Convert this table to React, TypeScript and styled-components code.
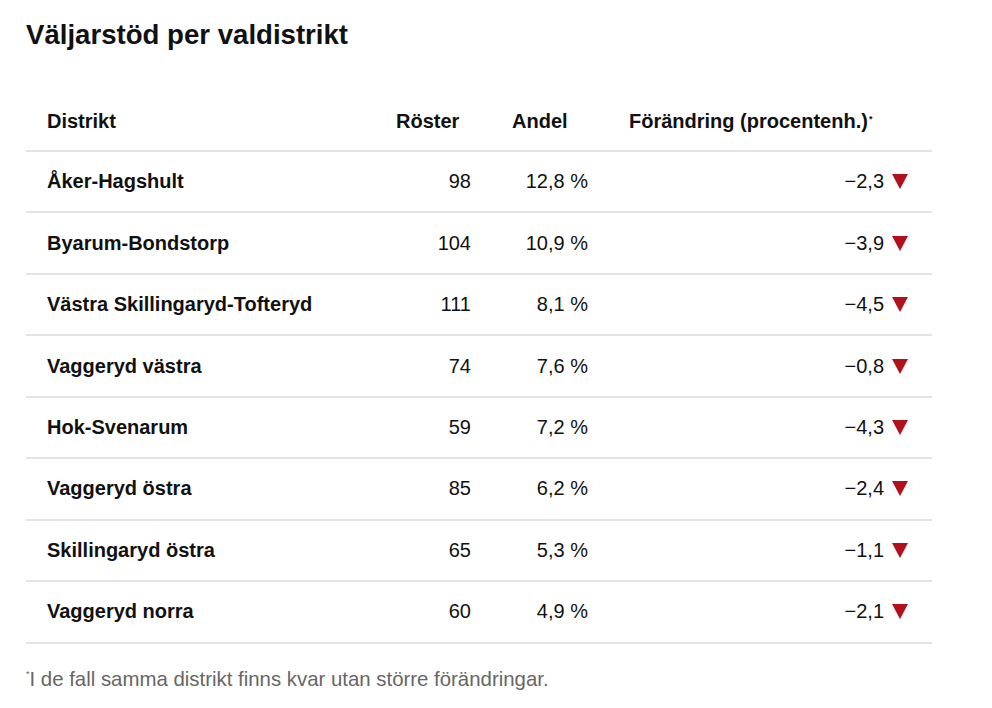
import React from "react";
import styled, { createGlobalStyle } from "styled-components";

const Global = createGlobalStyle`
  html, body { margin: 0; padding: 0; background: #fff; }
  body { font-family: "Liberation Sans", Arial, Helvetica, sans-serif; color: #111; }
`;

const Page = styled.div`
  padding: 19px 60px 0 26px;
  width: 906px;
`;

const Title = styled.h1`
  margin: 0;
  font-size: 27.6px;
  line-height: 32px;
  font-weight: 700;
  color: #111;
`;

const Table = styled.div`
  margin-top: 41px;
  display: grid;
  grid-template-columns: 349px 116px 117px 1fr;
`;

const Row = styled.div<{ $head?: boolean }>`
  display: contents;
  & > div {
    height: ${(p) => (p.$head ? "58px" : "59.45px")};
    border-bottom: 2px solid #e4e4e4;
  }
`;

const Cell = styled.div<{ $align?: "left" | "right"; $head?: boolean; $pr?: number }>`
  display: flex;
  align-items: center;
  justify-content: ${(p) => (p.$align === "right" ? "flex-end" : "flex-start")};
  padding: 0 ${(p) => p.$pr ?? 20}px 0 21px;
  font-size: 20px;
  font-weight: ${(p) => (p.$head ? 700 : 400)};
  color: #111;
  white-space: nowrap;
`;

const Name = styled(Cell)`
  font-weight: 700;
`;

const Sup = styled.sup`
  font-size: 9px;
  vertical-align: top;
  position: relative;
  top: -2px;
  margin-left: 1px;
`;

const Triangle = styled.svg`
  width: 16px;
  height: 15px;
  margin-left: 8px;
  flex: none;
`;

const Footnote = styled.p`
  margin: 24px 0 0 0;
  font-size: 20.4px;
  color: #666;
`;

const FootSup = styled.span`
  font-size: 9px;
  vertical-align: top;
  position: relative;
  top: 1px;
`;

const rows = [
  ["Åker-Hagshult", "98", "12,8 %", "−2,3"],
  ["Byarum-Bondstorp", "104", "10,9 %", "−3,9"],
  ["Västra Skillingaryd-Tofteryd", "111", "8,1 %", "−4,5"],
  ["Vaggeryd västra", "74", "7,6 %", "−0,8"],
  ["Hok-Svenarum", "59", "7,2 %", "−4,3"],
  ["Vaggeryd östra", "85", "6,2 %", "−2,4"],
  ["Skillingaryd östra", "65", "5,3 %", "−1,1"],
  ["Vaggeryd norra", "60", "4,9 %", "−2,1"],
];

const Down = () => (
  <Triangle viewBox="0 0 16 15">
    <polygon points="0,0 16,0 8,15" fill="#b3101d" />
  </Triangle>
);

export default function App() {
  return (
    <>
      <Global />
      <Page>
        <Title>Väljarstöd per valdistrikt</Title>
        <Table>
          <Row $head>
            <Cell $head>Distrikt</Cell>
            <Cell $head>Röster</Cell>
            <Cell $head>Andel</Cell>
            <Cell $head>
              Förändring (procentenh.)<Sup>*</Sup>
            </Cell>
          </Row>
          {rows.map((r) => (
            <Row key={r[0]}>
              <Name>{r[0]}</Name>
              <Cell $align="right">{r[1]}</Cell>
              <Cell $align="right">{r[2]}</Cell>
              <Cell $align="right" $pr={24}>
                {r[3]}
                <Down />
              </Cell>
            </Row>
          ))}
        </Table>
        <Footnote>
          <FootSup>*</FootSup>I de fall samma distrikt finns kvar utan större förändringar.
        </Footnote>
      </Page>
    </>
  );
}
